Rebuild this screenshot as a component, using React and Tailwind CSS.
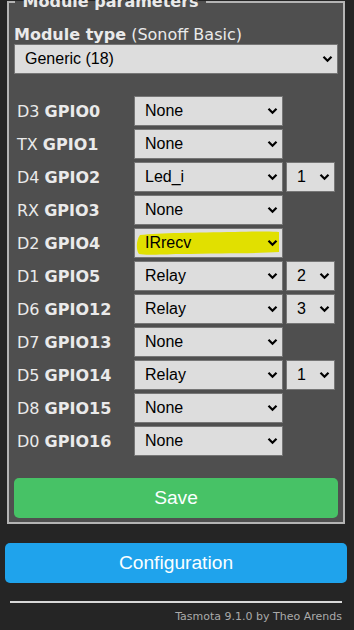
import React from 'react';

const gpios = [
  { pin: 'D3', name: 'GPIO0', value: 'None' },
  { pin: 'TX', name: 'GPIO1', value: 'None' },
  { pin: 'D4', name: 'GPIO2', value: 'Led_i', index: '1' },
  { pin: 'RX', name: 'GPIO3', value: 'None' },
  { pin: 'D2', name: 'GPIO4', value: 'IRrecv', marked: true },
  { pin: 'D1', name: 'GPIO5', value: 'Relay', index: '2' },
  { pin: 'D6', name: 'GPIO12', value: 'Relay', index: '3' },
  { pin: 'D7', name: 'GPIO13', value: 'None' },
  { pin: 'D5', name: 'GPIO14', value: 'Relay', index: '1' },
  { pin: 'D8', name: 'GPIO15', value: 'None' },
  { pin: 'D0', name: 'GPIO16', value: 'None' },
];

const Chevron = () => (
  <svg
    className="pointer-events-none absolute right-[4px] top-1/2 -translate-y-1/2"
    width="11"
    height="8"
    viewBox="0 0 11 8"
  >
    <path d="M1.5 1.8 L5.5 5.8 L9.5 1.8" fill="none" stroke="#000" strokeWidth="2.2" />
  </svg>
);

// Select box with own chevron, optional yellow marker stroke
const Select = ({ value, className = '', marked = false }) => (
  <div className={`relative h-[30px] border border-[#767676] bg-[#dddddd] ${className}`}>
    {marked && (
      <svg className="absolute left-0 top-0" width="147" height="28" viewBox="0 0 147 28">
        <path
          d="M5 6 C 25 4, 60 3.5, 100 3 C 122 2.5, 136 2, 144 3 L 144 23 C 122 24.5, 85 24, 45 25 C 25 25.5, 10 26.5, 4 25 C 1 21, 1 11, 5 6 Z"
          fill="#e1e000"
        />
      </svg>
    )}
    <select
      defaultValue={value}
      className="relative h-full w-full appearance-none bg-transparent pl-[10px] pr-[20px] text-[16px] text-black outline-none"
      style={{ fontFamily: '"Liberation Sans", Arial, sans-serif' }}
    >
      <option>{value}</option>
    </select>
    <Chevron />
  </div>
);

export default function App() {
  return (
    <div
      className="min-h-screen w-full overflow-hidden bg-[#252525] text-[#eaeaea]"
      style={{ fontFamily: '"DejaVu Sans", Verdana, sans-serif' }}
    >
      <div className="-mt-[8px] w-[347px] pl-[5px]">
        <fieldset className="mx-[2px] border-2 border-[#b4b4b4] bg-[#4f4f4f] px-[5px] pb-[4px]">
          <legend className="ml-[1px] px-[2px] text-[16px] font-bold leading-[19px]">
            {'\u00a0Module parameters\u00a0'}
          </legend>

          <div className="mt-[14px] text-[16px] leading-[19px]">
            <b>Module type</b> (Sonoff Basic)
          </div>
          <Select value="Generic (18)" className="w-full" />

          {/* GPIO table */}
          <div className="mt-[22px] flex flex-col gap-[3px]">
            {gpios.map((g) => (
              <div key={g.name} className="flex h-[30px] items-center">
                <div className="w-[120px] pl-[3px] text-[16px] leading-[19px]">
                  {g.pin} <b>{g.name}</b>
                </div>
                <Select value={g.value} marked={g.marked} className="w-[149px]" />
                {g.index && <Select value={g.index} className="ml-[3px] w-[49px]" />}
              </div>
            ))}
          </div>

          <button
            className="mt-[22px] h-[40px] w-full rounded-[5px] bg-[#47c266] text-[19.2px] text-[#faffff]"
            style={{ fontFamily: '"Liberation Sans", Arial, sans-serif' }}
          >
            Save
          </button>
        </fieldset>

        <button
          className="mt-[19px] h-[40px] w-full rounded-[5px] bg-[#1fa3ec] text-[19.2px] text-[#faffff]"
          style={{ fontFamily: '"Liberation Sans", Arial, sans-serif' }}
        >
          Configuration
        </button>

        <div className="mx-[5px] mt-[18px] h-[2px] bg-[#d8d8d8]" />

        <div className="mt-[7px] pr-[5px] text-right text-[11px] leading-[13px] text-[#aaaaaa]">
          Tasmota 9.1.0 by Theo Arends
        </div>
      </div>
    </div>
  );
}
